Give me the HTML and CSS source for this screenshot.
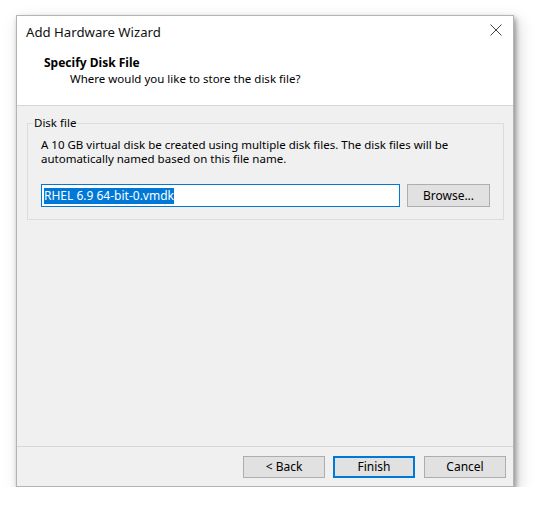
FILE: index.html
```html
<!DOCTYPE html>
<html>
<head>
<meta charset="utf-8">
<link rel="stylesheet" href="styles.css">
</head>
<body>
<div class="window">
  <div class="header">
    <div class="titlebar">
      <span class="title">Add Hardware Wizard</span>
      <svg class="close" width="12" height="12" viewBox="0 0 12 12"><path d="M0.5 0.5 L11.5 11.5 M11.5 0.5 L0.5 11.5" stroke="#444" stroke-width="1" fill="none"/></svg>
    </div>
    <div class="heading">Specify Disk File</div>
    <div class="subheading">Where would you like to store the disk file?</div>
  </div>
  <div class="content">
    <fieldset class="group">
      <legend>Disk file</legend>
      <p class="desc">A 10 GB virtual disk be created using multiple disk files. The disk files will be automatically named based on this file name.</p>
      <div class="filerow">
        <div class="input"><span class="sel">RHEL 6.9 64-bit-0.vmdk</span></div>
        <div class="btn">Browse...</div>
      </div>
    </fieldset>
  </div>
  <div class="footer">
    <div class="btn">&lt; Back</div>
    <div class="btn default">Finish</div>
    <div class="btn cancel">Cancel</div>
  </div>
</div>
</body>
</html>
```
FILE: styles.css
```css
html, body { margin: 0; padding: 0; background: #fff; }
body { font-family: "Noto Sans", "Open Sans", sans-serif; font-size: 11.5px; color: #000; }
.window {
  margin: 15px 0 0 16px;
  width: 496px;
  height: 470px;
  border: 1px solid #b4b4b4;
  background: #f0f0f0;
  display: flex;
  flex-direction: column;
  box-shadow: 2px 3px 5px rgba(0,0,0,0.35), 4px 6px 16px rgba(0,0,0,0.18);
}
.header { background: #fff; height: 90px; border-bottom: 1px solid #d6d6d6; box-sizing: border-box; flex: none; }
.titlebar { height: 32px; display: flex; align-items: center; justify-content: space-between; padding: 0 11px 0 9px; }
.title { font-size: 13.2px; color: #111; }
.close { display: block; margin-top: -4px; }
.heading { font-weight: bold; margin: 7px 0 0 27px; line-height: 16px; font-size: 12px; }
.subheading { margin: 0 0 0 53px; line-height: 16px; }
.content { flex: 1; padding: 10px 9px 0 10px; border-bottom: 1px solid #d6d6d6; }
.group { margin: 0; border: 1px solid #dcdcdc; padding: 0 13px 12px 13px; }
.group legend { padding: 0 1px; margin-left: -8px; line-height: 14px; }
.desc { margin: 8px 0 0 0; line-height: 14px; }
.filerow { display: flex; gap: 7px; margin-top: 18px; }
.input { width: 359px; height: 23px; box-sizing: border-box; border: 1px solid #0078d7; background: #fff; padding: 2px 2px; display: flex; align-items: center; font-size: 12px; }
.sel { background: #0078d7; color: #fff; line-height: 16px; }
.btn { width: 82px; height: 22px; box-sizing: border-box; border: 1px solid #adadad; background: #e1e1e1; display: flex; align-items: center; justify-content: center; font-size: 12px; }
.filerow .btn { height: 23px; width: 83px; }
.btn.default { border: 2px solid #0078d7; }
.btn.cancel { margin-left: 1px; }
.footer { height: 39px; display: flex; justify-content: flex-end; align-items: center; gap: 8px; padding-right: 7px; flex: none; }
```
